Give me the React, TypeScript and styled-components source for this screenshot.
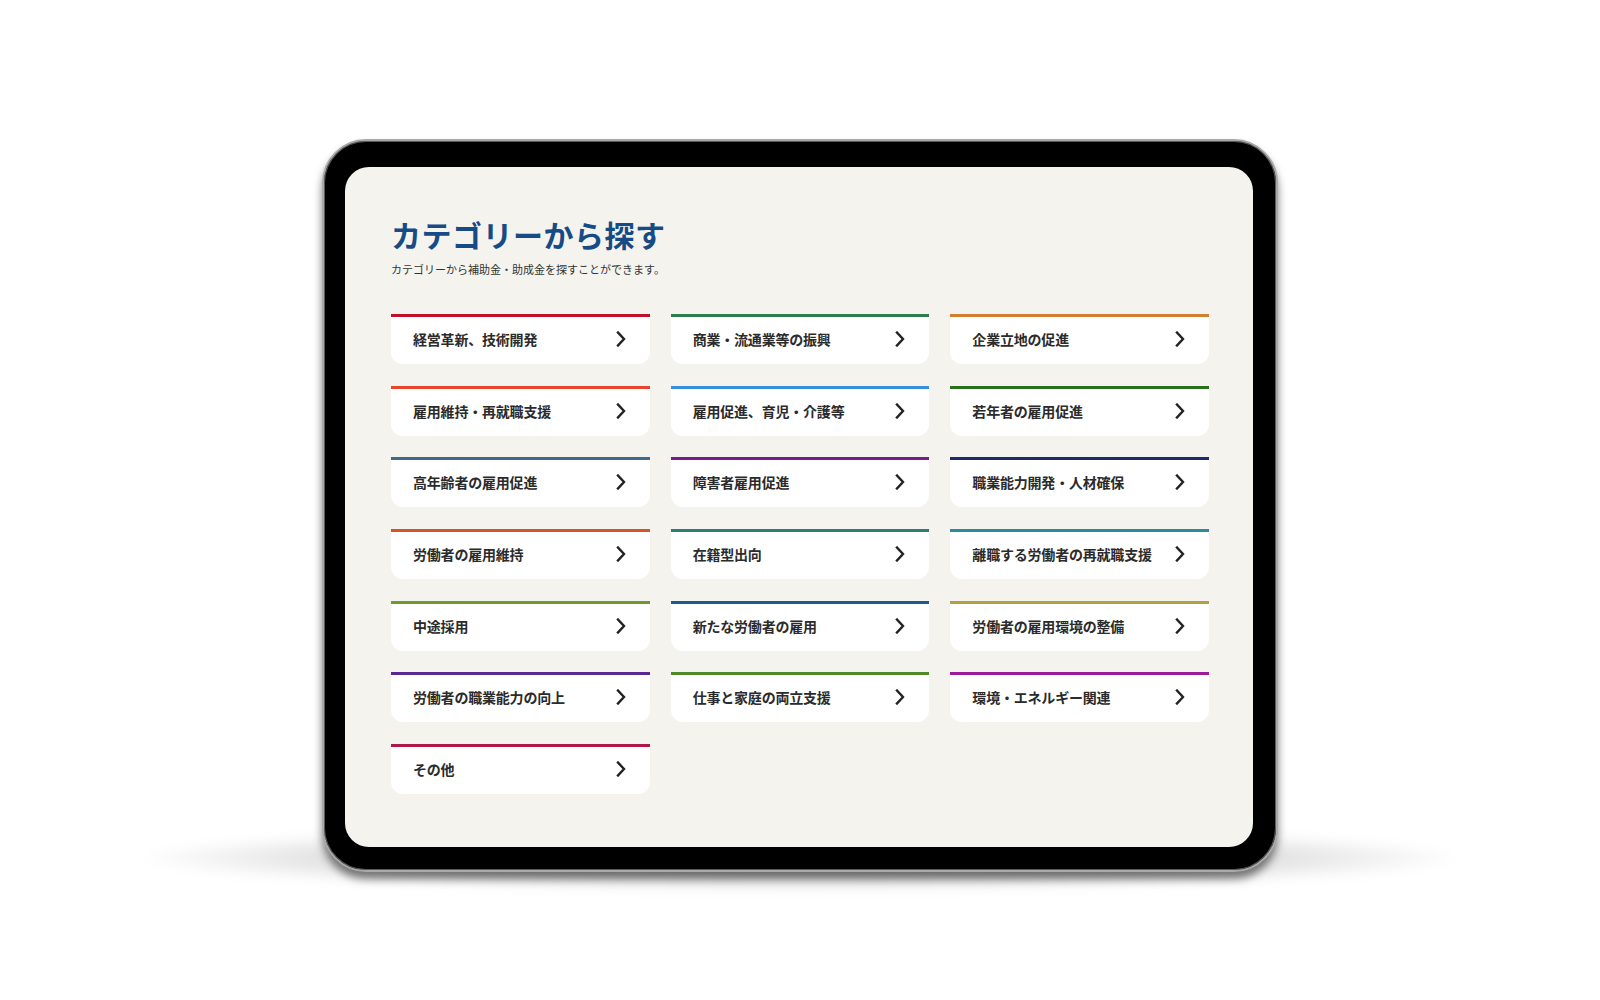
import styled, { createGlobalStyle } from "styled-components";

const GlobalStyle = createGlobalStyle`
body {
  margin: 0;
  background: #ffffff;
  font-family: "Noto Sans CJK JP", "Noto Sans", sans-serif;
}
`;

const Page = styled.div`
display: flex;
justify-content: center;
height: 1000px;
padding-top: 139px;
box-sizing: border-box;
overflow: hidden;
`;

const Device = styled.div`
position: relative;
width: 956px;
height: 733px;
box-sizing: border-box;
padding: 26px 23px 23px 21px;
border: 2px solid #a9a9ab;
border-radius: 44px;
background: #000;
box-shadow: inset 0 0 0 1px #5a5a5a, 0 7px 9px rgba(0, 0, 0, 0.5);

&::after {
  content: "";
  position: absolute;
  left: -180px;
  right: -180px;
  bottom: -20px;
  height: 64px;
  z-index: -1;
  border-radius: 50%;
  background: radial-gradient(ellipse at center, rgba(0, 0, 0, 0.24) 0%, rgba(0, 0, 0, 0.12) 50%, rgba(0, 0, 0, 0) 72%);
  filter: blur(6px);
}
`;

const Screen = styled.div`
height: 100%;
box-sizing: border-box;
padding: 49px 44px 0 46px;
border-radius: 24px;
background: #f4f3ee;
`;

const Title = styled.h1`
margin: 0;
font-size: 30px;
line-height: 36px;
font-weight: 700;
color: #174b85;
letter-spacing: 0.5px;
`;

const Lead = styled.p`
margin: 9px 0 0;
font-size: 11px;
line-height: 16px;
color: #333;
`;

const Grid = styled.ul`
display: grid;
grid-template-columns: repeat(3, 1fr);
column-gap: 21px;
row-gap: 21.7px;
margin: 37px 0 0;
padding: 0;
list-style: none;
`;

const Card = styled.a<{ $color: string }>`
display: flex;
align-items: center;
justify-content: space-between;
height: 50px;
box-sizing: border-box;
padding: 0 24px 3px 22px;
border-top: 3px solid ${({ $color }) => $color};
border-radius: 0 0 12px 12px;
background: #fff;
color: #2b2b2b;
text-decoration: none;
cursor: pointer;
`;

const Label = styled.span`
font-size: 14px;
line-height: 20px;
font-weight: 700;
letter-spacing: -0.2px;
`;

const Chevron = () => (
  <svg width="10" height="16" viewBox="0 0 10 16" fill="none">
    <path d="M2 1.5L8 8L2 14.5" stroke="#222" strokeWidth="2.4" strokeLinecap="square" />
  </svg>
);

const categories = [
  { name: "経営革新、技術開発", color: "#c0102a" },
  { name: "商業・流通業等の振興", color: "#2e7d4f" },
  { name: "企業立地の促進", color: "#d08030" },
  { name: "雇用維持・再就職支援", color: "#e8452e" },
  { name: "雇用促進、育児・介護等", color: "#3a8fdc" },
  { name: "若年者の雇用促進", color: "#2a6e1e" },
  { name: "高年齢者の雇用促進", color: "#3f6a8c" },
  { name: "障害者雇用促進", color: "#7b1a8c" },
  { name: "職業能力開発・人材確保", color: "#1e2a6e" },
  { name: "労働者の雇用維持", color: "#d4542a" },
  { name: "在籍型出向", color: "#2a8070" },
  { name: "離職する労働者の再就職支援", color: "#2e8a9a" },
  { name: "中途採用", color: "#6f9a30" },
  { name: "新たな労働者の雇用", color: "#1f5a88" },
  { name: "労働者の雇用環境の整備", color: "#b5a040" },
  { name: "労働者の職業能力の向上", color: "#5a2890" },
  { name: "仕事と家庭の両立支援", color: "#4f8a28" },
  { name: "環境・エネルギー関連", color: "#9c1a9c" },
  { name: "その他", color: "#b01848" },
];

export default function App() {
  return (
    <Page>
      <GlobalStyle />
      <Device>
        <Screen>
          <Title>カテゴリーから探す</Title>
          <Lead>カテゴリーから補助金・助成金を探すことができます。</Lead>
          <Grid>
            {categories.map((c) => (
              <li key={c.name}>
                <Card $color={c.color}>
                  <Label>{c.name}</Label>
                  <Chevron />
                </Card>
              </li>
            ))}
          </Grid>
        </Screen>
      </Device>
    </Page>
  );
}
